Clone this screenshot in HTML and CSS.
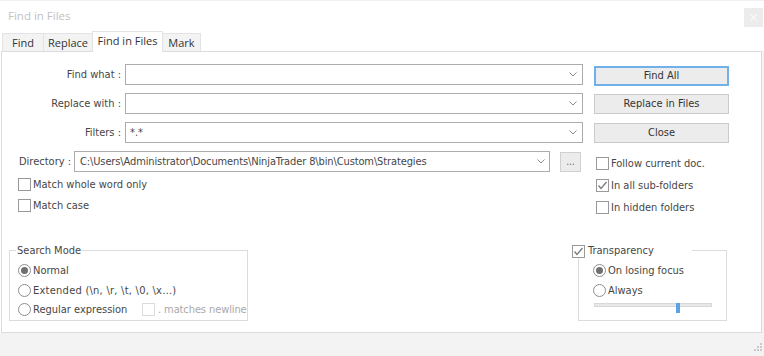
FILE: index.html
```html
<!DOCTYPE html>
<html>
<head>
<meta charset="utf-8">
<link rel="stylesheet" href="styles.css">
</head>
<body>
<div class="win">
  <header class="titlebar">
    <span class="title">Find in Files</span>
    <span class="close">&#215;</span>
  </header>
  <nav class="tabs">
    <span class="tab t-find">Find</span>
    <span class="tab t-replace">Replace</span>
    <span class="tab t-fif active">Find in Files</span>
    <span class="tab t-mark">Mark</span>
  </nav>
  <div class="main">
    <section class="panel">
      <div class="top">
        <div class="left">
          <div class="row">
            <span class="lbl">Find what :</span>
            <div class="combo"><span></span><svg class="chev" width="8" height="5" viewBox="0 0 8 5"><polyline points="0.5,0.5 4,4 7.5,0.5"/></svg></div>
          </div>
          <div class="row">
            <span class="lbl">Replace with :</span>
            <div class="combo"><span></span><svg class="chev" width="8" height="5" viewBox="0 0 8 5"><polyline points="0.5,0.5 4,4 7.5,0.5"/></svg></div>
          </div>
          <div class="row">
            <span class="lbl">Filters :</span>
            <div class="combo"><span>*.*</span><svg class="chev" width="8" height="5" viewBox="0 0 8 5"><polyline points="0.5,0.5 4,4 7.5,0.5"/></svg></div>
          </div>
          <div class="row dir">
            <span class="dlbl">Directory :</span>
            <div class="combo dcombo"><span class="path">C:\Users\Administrator\Documents\NinjaTrader 8\bin\Custom\Strategies</span><svg class="chev" width="8" height="5" viewBox="0 0 8 5"><polyline points="0.5,0.5 4,4 7.5,0.5"/></svg></div>
            <span class="dots">...</span>
          </div>
          <div class="chk lchk"><span class="box"></span><span>Match whole word only</span></div>
          <div class="chk lchk"><span class="box"></span><span>Match case</span></div>
        </div>
        <div class="right">
          <div class="btn primary">Find All</div>
          <div class="btn b2">Replace in Files</div>
          <div class="btn b3">Close</div>
          <div class="rchecks">
            <div class="chk rchk"><span class="box"></span><span>Follow current doc.</span></div>
            <div class="chk rchk"><span class="box checked"><svg width="11" height="11" viewBox="0 0 11 11"><polyline points="1.5,5.5 4,8.5 9.5,2"/></svg></span><span>In all sub-folders</span></div>
            <div class="chk rchk"><span class="box"></span><span>In hidden folders</span></div>
          </div>
        </div>
      </div>
      <div class="bottom">
        <div class="group g-search">
          <div class="legend">Search Mode</div>
          <div class="radio"><span class="rc on"><i></i></span><span>Normal</span></div>
          <div class="radio"><span class="rc"></span><span class="ext">Extended (\n, \r, \t, \0, \x…)</span></div>
          <div class="radio r3">
            <span class="re"><span class="rc"></span><span>Regular expression</span></span>
            <span class="box disabled"></span><span class="dis">. matches newline</span>
          </div>
        </div>
        <div class="group g-trans">
          <div class="legend tlegend"><span class="box checked"><svg width="11" height="11" viewBox="0 0 11 11"><polyline points="1.5,5.5 4,8.5 9.5,2"/></svg></span><span>Transparency</span></div>
          <div class="radio tr"><span class="rc on"><i></i></span><span>On losing focus</span></div>
          <div class="radio tr"><span class="rc"></span><span>Always</span></div>
          <div class="slider"><div class="track"></div><div class="thumb"></div></div>
        </div>
      </div>
    </section>
    <div class="strip"></div>
  </div>
  <footer class="foot">
    <svg class="grip" width="11" height="11" viewBox="0 0 11 11">
      <rect x="8" y="0" width="2" height="2"/>
      <rect x="5" y="3" width="2" height="2"/><rect x="8" y="3" width="2" height="2"/>
      <rect x="2" y="6" width="2" height="2"/><rect x="5" y="6" width="2" height="2"/><rect x="8" y="6" width="2" height="2"/>
    </svg>
  </footer>
</div>
</body>
</html>
```
FILE: styles.css
```css
* { box-sizing: border-box; }
body {
  margin: 0;
  font-family: "DejaVu Sans Condensed", "DejaVu Sans", sans-serif;
  font-stretch: condensed;
  font-size: 11px;
  color: #464646;
  background: #fff;
}
.win {
  width: 764px;
  height: 356px;
  display: flex;
  flex-direction: column;
  overflow: hidden;
  background: #fff;
}
.titlebar {
  height: 31px;
  border-top: 1px solid #f0f0f0;
  display: flex;
  justify-content: space-between;
  align-items: flex-start;
}
.title {
  margin: 8px 0 0 8px;
  font-family: "Open Sans", "Liberation Sans", sans-serif;
  font-stretch: normal;
  font-size: 11.5px;
  line-height: 14px;
  color: #c2c2c2;
}
.close {
  width: 19px;
  height: 19px;
  margin: 7px 1px 0 0;
  background: #ececec;
  color: #fafafa;
  font-size: 14px;
  line-height: 18px;
  text-align: center;
}
.tabs {
  height: 21px;
  margin-bottom: -1px;
  display: flex;
  align-items: flex-end;
  padding-left: 2px;
}
.tab {
  height: 19px;
  border: 1px solid #e3e3e3;
  border-bottom: none;
  background: #f3f3f3;
  text-align: center;
  line-height: 17px;
  color: #333;
  font-family: "Open Sans", "Liberation Sans", sans-serif;
  font-stretch: normal;
  font-size: 11px;
}
.tab + .tab { margin-left: -1px; }
.t-find { width: 42px; }
.t-replace { width: 50px; }
.t-fif { width: 71px; }
.t-mark { width: 39px; }
.tab.active {
  height: 21px;
  background: #fff;
  position: relative;
  z-index: 1;
}
.main {
  display: flex;
  height: 282px;
}
.panel {
  width: 761px;
  margin-left: 1px;
  border: 1px solid #dcdcdc;
  background: #fff;
}
.strip {
  flex: 1;
  background: #f3f3f3;
}
.top { display: flex; }
.left {
  width: 592px;
  padding-top: 12px;
}
.row {
  display: flex;
  align-items: center;
  height: 21px;
  margin-bottom: 8px;
}
.lbl {
  width: 119px;
  margin-right: 4px;
  text-align: right;
  white-space: nowrap;
}
.combo {
  width: 458px;
  height: 21px;
  border: 1px solid #acacac;
  background: #fff;
  display: flex;
  align-items: center;
  justify-content: space-between;
  padding: 0 5px 0 4px;
  white-space: nowrap;
}
.chev { display: block; }
.chev polyline { fill: none; stroke: #8a8a8a; stroke-width: 1; }
.row.dir {
  padding-left: 17px;
  margin-bottom: 2px;
}
.dlbl { width: 55px; white-space: nowrap; }
.dcombo {
  width: 476px;
  padding-left: 5px;
  padding-right: 4px;
  margin-right: 10px;
}
.path { letter-spacing: -0.12px; }
.ext { letter-spacing: 0.25px; }
.dots {
  width: 21px;
  height: 20px;
  border: 1px solid #d0d0d0;
  background: #ececec;
  color: #666;
  text-align: center;
  line-height: 18px;
  font-size: 10px;
}
.chk {
  display: flex;
  align-items: center;
  gap: 2px;
  white-space: nowrap;
}
.lchk {
  height: 21px;
  padding-left: 16px;
}
.box {
  width: 13px;
  height: 13px;
  border: 1px solid #999;
  background: #fff;
  display: flex;
  align-items: center;
  justify-content: center;
  flex: none;
}
.box svg polyline { fill: none; stroke: #7a7a7a; stroke-width: 1.3; }
.box.disabled { border-color: #dcdcdc; }
.right {
  width: 135px;
  padding-top: 14px;
}
.btn {
  width: 135px;
  height: 20px;
  border: 1px solid #cbcbcb;
  background: #ececec;
  text-align: center;
  line-height: 18px;
  color: #333;
}
.btn.primary {
  border: 2px solid #70b1e9;
  line-height: 16px;
}
.b2 { margin-top: 8px; }
.b3 { margin-top: 9px; }
.rchecks { margin-top: 9px; }
.rchk {
  height: 22px;
  padding-left: 2px;
}
.bottom {
  display: flex;
  justify-content: space-between;
  padding: 0 34px 0 7px;
  margin-top: 32px;
}
.group {
  border: 1px solid #dcdcdc;
  height: 71px;
}
.g-search { width: 239px; }
.g-trans { width: 149px; }
.legend {
  width: max-content;
  height: 13px;
  line-height: 13px;
  margin: -7px 0 3px 6px;
  padding: 0 1px;
  background: #fff;
}
.tlegend {
  width: 120px;
  height: 14px;
  line-height: 14px;
  margin: -7px 0 2px -7px;
  padding: 0;
  display: flex;
  align-items: center;
  gap: 3px;
}
.radio {
  display: flex;
  align-items: center;
  gap: 2px;
  height: 20px;
  padding-left: 8px;
  white-space: nowrap;
}
.radio.r3 { height: 19px; }
.radio.tr { padding-left: 14px; }
.re {
  display: flex;
  align-items: center;
  gap: 2px;
  width: 122px;
}
.dis { color: #a9a9a9; margin-left: 1px; letter-spacing: -0.1px; }
.rc {
  width: 13px;
  height: 13px;
  border: 1px solid #8e8e8e;
  border-radius: 50%;
  background: #fff;
  display: flex;
  align-items: center;
  justify-content: center;
  flex: none;
}
.rc i {
  display: block;
  width: 7px;
  height: 7px;
  border-radius: 50%;
  background: #707070;
}
.slider {
  position: relative;
  width: 118px;
  height: 10px;
  margin: 2px 0 0 15px;
}
.track {
  margin-top: 3px;
  height: 4px;
  border: 1px solid #d8d8d8;
  background: #e8e8e8;
}
.thumb {
  position: absolute;
  left: 82px;
  top: 0;
  width: 4px;
  height: 10px;
  background: #5ba3e2;
}
.foot {
  height: 23px;
  background: #f3f3f3;
  display: flex;
  justify-content: flex-end;
  align-items: flex-end;
}
.grip {
  display: block;
  margin: 0 1px 2px 0;
}
.grip rect { fill: #c8c8c8; }
```
